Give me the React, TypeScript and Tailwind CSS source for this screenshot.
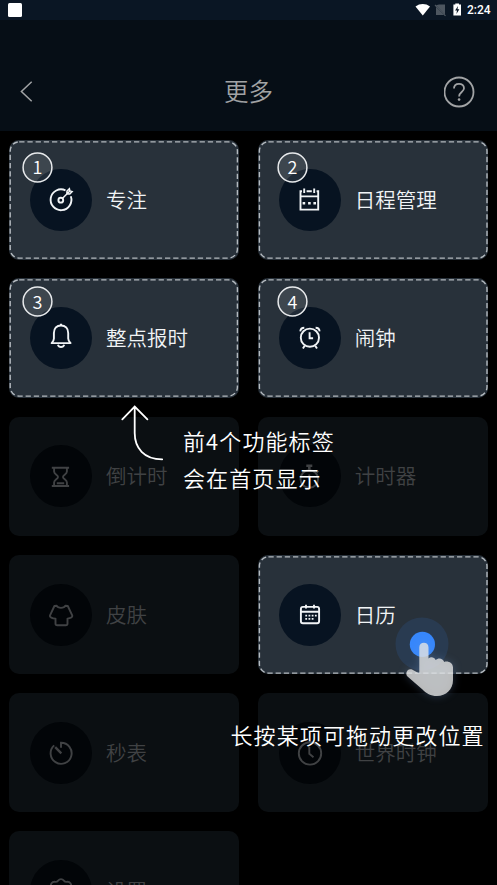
import type { ReactNode } from "react";

type Tile = {
  label: string;
  icon: ReactNode;
  active?: boolean;
  badge?: string;
  badgeTop?: string;
};

const FocusIcon = (
  <>
    <path d="M35.5 21.4A10.4 10.4 0 1 0 40.8 27.3" />
    <circle cx="30.8" cy="31.2" r="2.4" />
    <path d="M32.6 29.2 39.6 22.2M36.8 24.8 37 22.2 39.4 19.8 39.9 21.9 42.1 22.6 39.8 24.9Z" strokeWidth="1.5" />
  </>
);

const ScheduleIcon = (
  <>
    <path d="M23 22.3H21.5V40.6H39.2V22.3H37.6M27.6 22.3H32.8M21.5 27.4H39.2M25.2 19.6V24M35.2 19.6V24" />
    <path d="M23.6 34.2H26.2M29.1 34.2H31.7M34.4 34.2H37" strokeWidth="2.6" />
  </>
);

const BellIcon = (
  <>
    <path d="M21.6 36.1H40.6C39 34.6 38.2 33.5 38.2 31.5V26C38.2 21.3 35.3 18.5 31 18.5S23.9 21.3 23.9 26V31.5C23.9 33.5 23.2 34.6 21.6 36.1Z" strokeLinejoin="round" />
    <path d="M29.9 17.6H32.1M27.9 37.8C28.4 39.3 29.5 40 31 40S33.7 39.3 34.2 37.8" />
  </>
);

const AlarmIcon = (
  <>
    <circle cx="30.9" cy="30.7" r="9.1" />
    <path d="M30.6 25.2V31.2H34.1M25.7 38.7 23.9 41.5M36.2 38.7 38 41.5M21.3 24.3C21.5 22.1 23.1 20.8 25.3 20.8M40.6 24.3C40.4 22.1 38.8 20.8 36.6 20.8" />
  </>
);

const HourglassIcon = (
  <path d="M21.8 22.8H39.1M21.8 41H39.1M24.1 23V26.6C24.1 29.4 28 30 28 32S24.1 34.8 24.1 37.4V41M36.9 23V26.6C36.9 29.4 33 30 33 32S36.9 34.8 36.9 37.4V41M26.8 38.2H34.2" />
);

const TimerIcon = (
  <>
    <circle cx="30.3" cy="34" r="8.8" />
    <path d="M27.3 20.8H33.3M30.3 21V25M37.4 25.6 39.2 27.2" strokeWidth="2.6" />
    <path d="M30.3 29.5V34.5" />
  </>
);

const SkinIcon = (
  <path d="M26.6 21.7C28 24.6 34 24.6 35.4 21.7L37.8 22 42.3 31.6C42.6 33 40.8 34.4 37.5 34.6V39.4C37.5 40.6 37 41.2 35.8 41.2H27.2C26 41.2 25.5 40.6 25.5 39.4V34.6C22.2 34.4 19.4 33 19.9 31.6L24.4 22Z" strokeLinejoin="round" />
);

const CalendarIcon = (
  <>
    <rect x="21.9" y="22.9" width="18.2" height="16.3" rx="2" />
    <path d="M21.9 27.8H40.1M27 20.8V24.4M35 20.8V24.4" />
    <path d="M26.3 31.6H38M26.3 34.8H35" strokeWidth="1.8" strokeDasharray="1.8 1.4" />
  </>
);

const StopwatchIcon = (
  <>
    <path d="M31 25.8V20.8A10.5 10.5 0 1 1 24.2 23.4" />
    <path d="M25.2 25.2 31.3 31.3" strokeWidth="2.4" />
  </>
);

const ClockIcon = (
  <>
    <circle cx="31" cy="31.4" r="11.2" />
    <path d="M30.3 25V31.8L34.5 35.3" />
  </>
);

const SettingsIcon = (
  <>
    <path d="M31 19.1C34.3 19.1 33.5 22.2 36.5 21.9C40.1 21.3 42.1 24.3 40.6 27.1C39.6 29.3 39.6 32.8 40.6 35C42.1 38 40.1 40.8 36.5 40.2C33.5 39.9 34.3 43 31 43S28.5 39.9 25.5 40.2C21.9 40.8 19.9 38 21.4 35C22.4 32.8 22.4 29.3 21.4 27.1C19.9 24.3 21.9 21.3 25.5 21.9C28.5 22.2 27.7 19.1 31 19.1Z" />
    <circle cx="31" cy="31" r="4" />
  </>
);

const tiles: Tile[] = [
  { label: "专注", icon: FocusIcon, active: true, badge: "1", badgeTop: "top-[11.5px]" },
  { label: "日程管理", icon: ScheduleIcon, active: true, badge: "2", badgeTop: "top-[11.5px]" },
  { label: "整点报时", icon: BellIcon, active: true, badge: "3", badgeTop: "top-[7.5px]" },
  { label: "闹钟", icon: AlarmIcon, active: true, badge: "4", badgeTop: "top-[7.5px]" },
  { label: "倒计时", icon: HourglassIcon },
  { label: "计时器", icon: TimerIcon },
  { label: "皮肤", icon: SkinIcon },
  { label: "日历", icon: CalendarIcon, active: true },
  { label: "秒表", icon: StopwatchIcon },
  { label: "世界时钟", icon: ClockIcon },
  { label: "设置", icon: SettingsIcon },
];

function TileCard({ tile, right }: { tile: Tile; right: boolean }) {
  return (
    <div
      className={`relative flex items-center rounded-[10px] pl-[20.8px] ${
        tile.active ? "bg-[#28313a] text-[#f1f4f6]" : "bg-[#0b0f12] text-[#404244]"
      }`}
    >
      {tile.active && (
        <svg className="absolute inset-0 h-full w-full" fill="none">
          <rect
            x={right ? 1.4 : 1.2}
            y="1.9"
            width={right ? 227.6 : 227.2}
            height="116.2"
            rx="9"
            stroke="#b4babf"
            strokeWidth="1.4"
            strokeDasharray="5.3 2.9"
          />
        </svg>
      )}
      <div className={`h-[62px] w-[62px] shrink-0 rounded-full ${tile.active ? "bg-[#071321]" : "bg-[#020508]"}`}>
        <svg viewBox="0 0 62 62" className="h-full w-full" fill="none" stroke="currentColor" strokeWidth="1.9">
          {tile.icon}
        </svg>
      </div>
      <span className="ml-[14px] pb-[2px] text-[20.5px] leading-[30px] font-[350] whitespace-nowrap">{tile.label}</span>
      {tile.badge && (
        <div
          className={`absolute h-[31px] w-[31px] text-white ${right ? "left-[19px]" : "left-[12.7px]"} ${tile.badgeTop}`}
        >
          <svg viewBox="0 0 31 31" className="absolute inset-0 h-full w-full">
            <circle cx="15.5" cy="15.5" r="14.4" fill="#fff" fillOpacity="0.1" stroke="#e8eaec" strokeWidth="1.5" />
          </svg>
          <span className="relative flex h-[29.5px] items-center justify-center text-[18px] leading-none font-[350]">
            {tile.badge}
          </span>
        </div>
      )}
    </div>
  );
}

function StatusBar() {
  return (
    <div className="flex h-5 items-center justify-between bg-[#0a1624] pr-[6px] pl-2">
      <div className="h-[14px] w-[14px] rounded-[1.5px] bg-white" />
      <div className="flex h-full items-center">
        <svg width="52" height="20" viewBox="0 0 52 20">
          <path d="M0.5 6.4C4.8 3.1 10.7 3.1 15 6.4L7.8 15.4Z" fill="#fff" />
          <path d="M21 5.3 24 4.4H30V14.8L21 5.3ZM21 7V15H29Z" fill="#4d5660" />
          <path d="M20 5 30.5 15.8" stroke="#4d5660" strokeWidth="1.2" />
          <path d="M38.4 4.6H40.3V3.5H44V4.6H46V15.6H38.4Z" fill="#fff" />
          <path d="M43 6 40.1 10.6H42L41.4 13.9 44.4 9.3H42.5Z" fill="#0a1624" />
        </svg>
        <span className="w-[24px] font-[Roboto,sans-serif] text-[12px] leading-5 font-medium text-white">2:24</span>
      </div>
    </div>
  );
}

function Header() {
  return (
    <header className="flex h-[110.5px] items-end justify-between bg-[#060e16] px-[19px] pb-[20.5px] text-[#a1a3a5]">
      <svg width="34" height="38" viewBox="0 0 34 38" fill="none" stroke="currentColor" strokeWidth="1.5">
        <path d="M12.7 9.7 2.4 19.5 12.7 29.3" />
      </svg>
      <h1 className="text-[24.5px] leading-[38px] font-[350]">更多</h1>
      <svg width="34" height="38" viewBox="0 0 34 38" fill="none" stroke="currentColor" strokeWidth="1.8">
        <circle cx="15" cy="20" r="14.5" />
        <path d="M10 16.6C10 13.5 12.1 11.8 15 11.8S20 13.6 20 16.3C20 20 15.1 20.1 15.1 24.4" />
        <circle cx="15.1" cy="27.6" r="1.3" fill="currentColor" stroke="none" />
      </svg>
    </header>
  );
}

export default function App() {
  return (
    <div className="relative h-[885px] w-[497px] overflow-hidden bg-black font-['Noto_Sans_CJK_SC',sans-serif]">
      <StatusBar />
      <Header />
      <main className="grid auto-rows-[119.5px] grid-cols-[230px_230px] gap-x-[18.6px] gap-y-[18.7px] pt-[9.7px] pl-[9.3px]">
        {tiles.map((tile, i) => (
          <TileCard key={tile.label} tile={tile} right={i % 2 === 1} />
        ))}
      </main>

      <svg className="absolute top-[400px] left-[116px]" width="52" height="66" fill="none" stroke="#fff" strokeWidth="1.8" strokeLinecap="round">
        <path d="M6.3 19.4 18.7 6.6 31.4 19.4M18.7 6.6V33C18.7 48 28 59.3 46.2 59.3" />
      </svg>
      <p className="absolute top-[421.5px] left-[183px] text-[22px] leading-[37.5px] font-[350] tracking-[1.1px] whitespace-nowrap text-white">
        前4个功能标签
        <br />
        会在首页显示
      </p>

      <svg className="absolute top-[610px] left-[390px]" width="75" height="95">
        <circle cx="32" cy="34" r="26.5" fill="#2f6fd0" fillOpacity="0.16" />
        <circle cx="32.4" cy="34.4" r="12.6" fill="#3787fb" />
        <path
          d="M29.3 37.2C29.3 31.4 38.5 31.4 38.5 37.2V48.5C40.5 46.5 44.5 47 45.6 50C48.5 47.2 53 48.2 54.2 52C58 50.7 62.8 52.8 63 57.5V70C63 79.5 56 86 47 86C40.5 86 36.5 83.5 32.5 79.5L17.5 66.5C14.5 63.5 17.5 58.2 22 59.5L29.3 63.5Z"
          fill="#e4e3e2"
          fillOpacity="0.8"
          className="drop-shadow-[0_0_4px_rgba(120,160,220,0.35)]"
        />
      </svg>
      <p className="absolute top-[716px] left-[230.5px] text-[22px] leading-[36px] font-[350] tracking-[1.1px] whitespace-nowrap text-white">
        长按某项可拖动更改位置
      </p>
    </div>
  );
}
